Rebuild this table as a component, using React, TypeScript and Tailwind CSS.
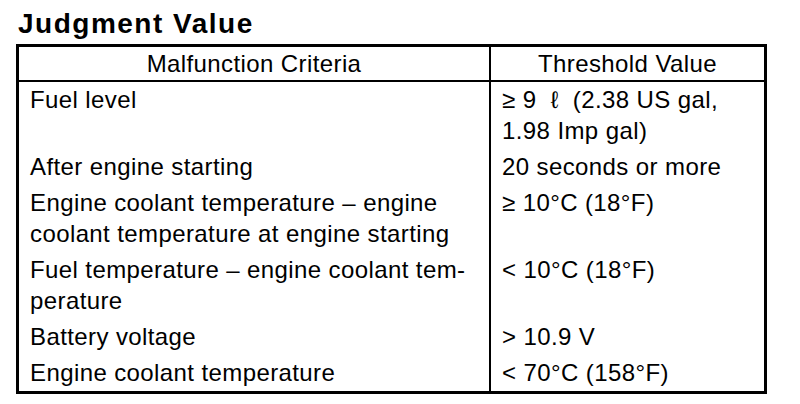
const rows: { criteria: string[]; value: string[] }[] = [
  { criteria: ["Fuel level"], value: ["\u2265 9  \u2113  (2.38 US gal,", "1.98 Imp gal)"] },
  { criteria: ["After engine starting"], value: ["20 seconds or more"] },
  {
    criteria: ["Engine coolant temperature \u2013 engine", "coolant temperature at engine starting"],
    value: ["\u2265 10\u00b0C (18\u00b0F)"],
  },
  {
    criteria: ["Fuel temperature \u2013 engine coolant tem-", "perature"],
    value: ["< 10\u00b0C (18\u00b0F)"],
  },
  { criteria: ["Battery voltage"], value: ["> 10.9 V"] },
  { criteria: ["Engine coolant temperature"], value: ["< 70\u00b0C (158\u00b0F)"] },
];

const App = () => {
  return (
    <div className="w-[800px] h-[404px] bg-white text-black font-['Liberation_Sans',Arial,sans-serif] overflow-hidden">
      <h1 className="pl-[18px] pt-[8px] h-[44px] text-[28px] leading-[32px] font-bold tracking-[1.5px]">
        Judgment Value
      </h1>

      <div className="ml-[16px] w-[751px] border-[3px] border-black">
        <div className="grid grid-cols-[472px_1fr] border-b-2 border-black text-[24px] leading-[33px] tracking-[0.4px]">
          <div className="border-r-2 border-black text-center">Malfunction Criteria</div>
          <div className="text-center">Threshold Value</div>
        </div>

        <div className="grid grid-cols-[472px_1fr] text-[24px] leading-[31px] tracking-[0.4px]">
          {rows.map((row, i) => (
            <div key={i} className="contents">
              <div className="border-r-2 border-black pl-[11px] pt-[2px] pb-[3px]">
                {row.criteria.map((line) => (
                  <div key={line} className="whitespace-pre">{line}</div>
                ))}
              </div>
              <div className="pl-[11px] pt-[2px] pb-[3px]">
                {row.value.map((line) => (
                  <div key={line} className="whitespace-pre">{line}</div>
                ))}
              </div>
            </div>
          ))}
        </div>
      </div>
    </div>
  );
};

export default App;
